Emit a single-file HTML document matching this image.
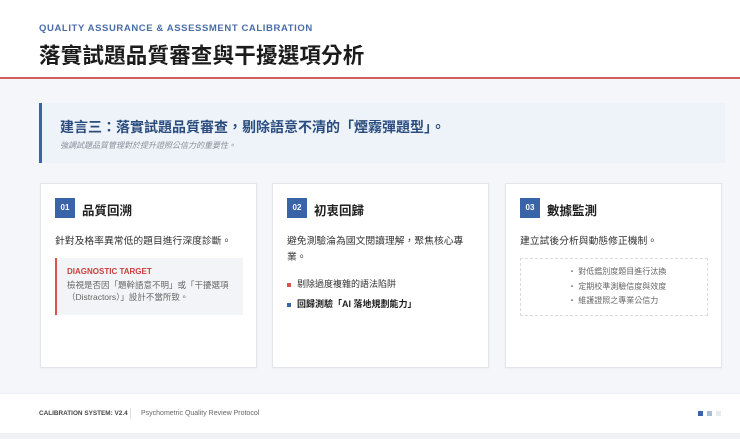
<!DOCTYPE html>
<html><head><meta charset="utf-8"><style>
*{margin:0;padding:0;box-sizing:border-box}
body{width:740px;height:439px;overflow:hidden;font-family:"Liberation Sans","Noto Sans CJK TC",sans-serif;background:#f0f1f4;position:relative}
.hdr{position:absolute;left:0;top:0;width:740px;height:77px;background:#fff}
.redline{position:absolute;left:0;top:77px;width:740px;height:2px;background:#d0605c}
.eyebrow{position:absolute;left:39px;top:23px;font-size:9.5px;font-weight:bold;color:#4a6da6;letter-spacing:.6px}
.h1{position:absolute;left:39px;top:39px;font-size:21.5px;font-weight:bold;color:#1c1c1c;letter-spacing:.2px}
.main{position:absolute;left:0;top:79px;width:740px;height:314px;background:#f4f6fa}
.call{position:absolute;left:39px;top:24px;width:686px;height:60px;background:#eef3fa;border-left:3px solid #3a64a8}
.call .t{position:absolute;left:18px;top:14px;font-size:14px;font-weight:bold;color:#2a4c7e}
.call .s{position:absolute;left:18px;top:37px;font-size:8px;font-style:italic;color:#8a8f98}
.card{position:absolute;top:104px;width:217px;height:185px;background:#fff;border:1px solid #e2e5ea;box-shadow:0 1px 2px rgba(0,0,0,.04)}
.badge{position:absolute;left:14px;top:14px;width:20px;height:20px;background:#3a64a8;color:#fff;font-size:8px;font-weight:bold;text-align:center;line-height:20px}
.ct{position:absolute;left:41px;top:16px;font-size:12.5px;font-weight:bold;color:#1e1e1e}
.cd{position:absolute;left:14px;top:50px;width:190px;font-size:9.8px;color:#333;line-height:16px}
.diag{position:absolute;left:14px;top:74px;width:188px;height:57px;background:#f3f4f7;border-left:2px solid #d9534f}
.diag .a{position:absolute;left:10px;top:9px;font-size:8px;font-weight:bold;color:#c9403c}
.diag .b{position:absolute;left:10px;top:21px;font-size:8.5px;color:#666;line-height:12px;width:175px}
.li{position:absolute;left:14px;font-size:9px;color:#333}
.li i{display:inline-block;width:4px;height:4px;margin-right:6px;vertical-align:middle}
.box{position:absolute;left:14px;top:74px;width:188px;height:58px;border:1px dashed #d8dbe0;font-size:8px;color:#666;line-height:14.5px;padding:6px 0 0 47px}
.ftr{position:absolute;left:0;top:393px;width:740px;height:40px;background:#fff;border-top:1px solid #eceef1}
.ftr .a{position:absolute;left:39px;top:16px;font-size:6.4px;font-weight:bold;color:#444}
.ftr .sep{position:absolute;left:130px;top:14px;width:1px;height:11px;background:#e0e0e0}
.ftr .b{position:absolute;left:141px;top:15.5px;font-size:7px;color:#666}
.dot{position:absolute;top:17px;width:5px;height:5px}
</style></head><body>
<div class="hdr"><div class="eyebrow">QUALITY ASSURANCE &amp; ASSESSMENT CALIBRATION</div><div class="h1">落實試題品質審查與干擾選項分析</div></div>
<div class="redline"></div>
<div class="main">
<div class="call"><div class="t">建言三：落實試題品質審查，剔除語意不清的「煙霧彈題型」。</div><div class="s">強調試題品質管理對於提升證照公信力的重要性。</div></div>
<div class="card" style="left:40px"><div class="badge">01</div><div class="ct">品質回溯</div><div class="cd">針對及格率異常低的題目進行深度診斷。</div>
<div class="diag"><div class="a">DIAGNOSTIC TARGET</div><div class="b">檢視是否因「題幹語意不明」或「干擾選項（Distractors）」設計不當所致。</div></div></div>
<div class="card" style="left:272px"><div class="badge">02</div><div class="ct">初衷回歸</div><div class="cd">避免測驗淪為國文閱讀理解，聚焦核心專業。</div>
<div class="li" style="top:93px"><i style="background:#d9534f"></i>剔除過度複雜的語法陷阱</div>
<div class="li" style="top:113px;font-weight:bold;color:#1e1e1e"><i style="background:#3a64a8"></i>回歸測驗「AI 落地規劃能力」</div></div>
<div class="card" style="left:505px"><div class="badge">03</div><div class="ct">數據監測</div><div class="cd">建立試後分析與動態修正機制。</div>
<div class="box">・ 對低鑑別度題目進行汰換<br>・ 定期校準測驗信度與效度<br>・ 維護證照之專業公信力</div></div>
</div>
<div class="ftr"><div class="a">CALIBRATION SYSTEM: V2.4</div><div class="sep"></div><div class="b">Psychometric Quality Review Protocol</div>
<div class="dot" style="left:698px;background:#3a64a8"></div><div class="dot" style="left:707px;background:#a9bcd8"></div><div class="dot" style="left:716px;background:#e6e9ee"></div></div>
</body></html>
